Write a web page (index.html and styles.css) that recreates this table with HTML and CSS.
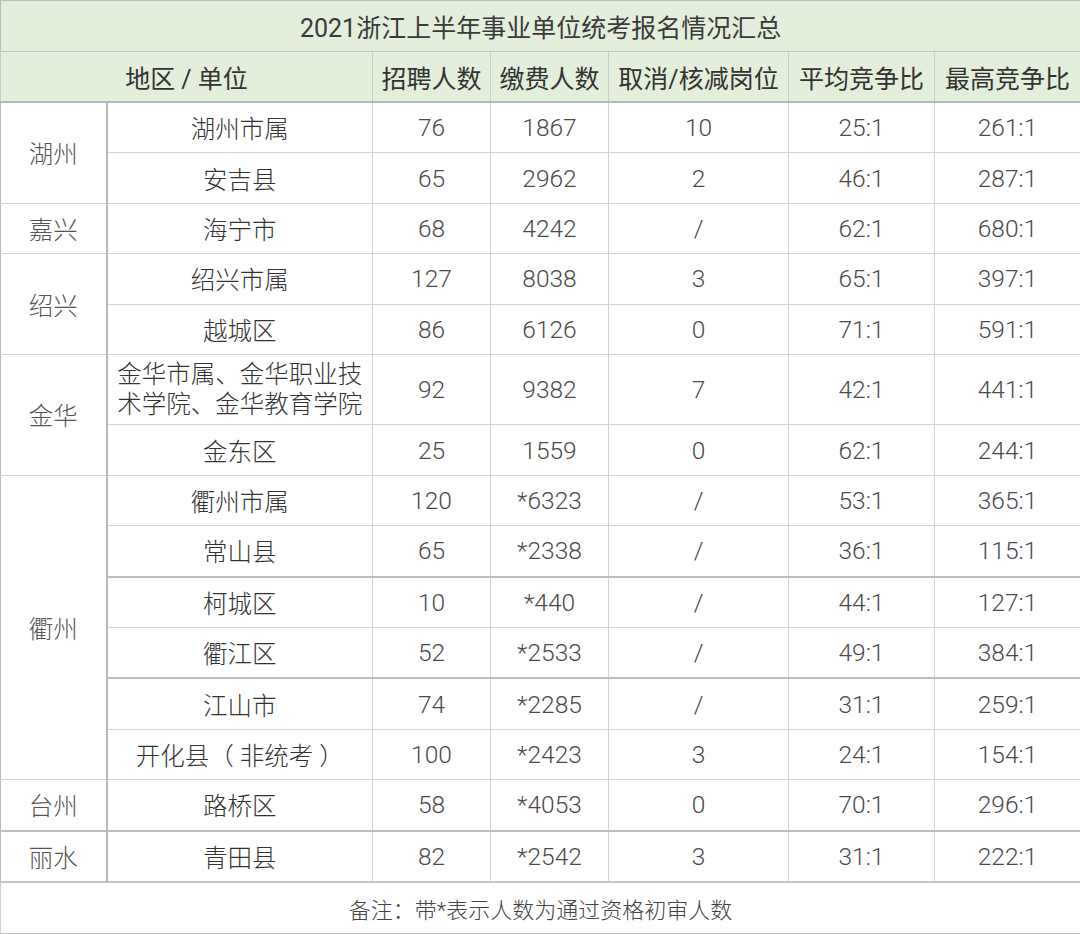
FILE: index.html
```html
<!DOCTYPE html>
<html lang="zh-CN">
<head>
<meta charset="utf-8">
<title>2021浙江上半年事业单位统考报名情况汇总</title>
<link rel="stylesheet" href="styles.css">
</head>
<body>
<table class="sheet">
  <colgroup>
    <col class="c-area"><col class="c-unit"><col class="c-n1"><col class="c-n2"><col class="c-n3"><col class="c-n4"><col class="c-n5">
  </colgroup>
  <thead>
    <tr class="title-row"><th colspan="7">2021浙江上半年事业单位统考报名情况汇总</th></tr>
    <tr class="head-row">
      <th colspan="2">地区 / 单位</th>
      <th>招聘人数</th>
      <th>缴费人数</th>
      <th>取消/核减岗位</th>
      <th>平均竞争比</th>
      <th>最高竞争比</th>
    </tr>
  </thead>
  <tbody>
    <tr><td class="area" rowspan="2">湖州</td><td class="unit">湖州市属</td><td>76</td><td>1867</td><td>10</td><td>25:1</td><td>261:1</td></tr>
    <tr><td class="unit">安吉县</td><td>65</td><td>2962</td><td>2</td><td>46:1</td><td>287:1</td></tr>
    <tr class="grp"><td class="area">嘉兴</td><td class="unit">海宁市</td><td>68</td><td>4242</td><td>/</td><td>62:1</td><td>680:1</td></tr>
    <tr class="grp"><td class="area" rowspan="2">绍兴</td><td class="unit">绍兴市属</td><td>127</td><td>8038</td><td>3</td><td>65:1</td><td>397:1</td></tr>
    <tr><td class="unit">越城区</td><td>86</td><td>6126</td><td>0</td><td>71:1</td><td>591:1</td></tr>
    <tr class="grp tall"><td class="area" rowspan="2">金华</td><td class="unit wrap">金华市属、金华职业技术学院、金华教育学院</td><td>92</td><td>9382</td><td>7</td><td>42:1</td><td>441:1</td></tr>
    <tr><td class="unit">金东区</td><td>25</td><td>1559</td><td>0</td><td>62:1</td><td>244:1</td></tr>
    <tr class="grp"><td class="area" rowspan="6">衢州</td><td class="unit">衢州市属</td><td>120</td><td>*6323</td><td>/</td><td>53:1</td><td>365:1</td></tr>
    <tr><td class="unit">常山县</td><td>65</td><td>*2338</td><td>/</td><td>36:1</td><td>115:1</td></tr>
    <tr class="dark"><td class="unit">柯城区</td><td>10</td><td>*440</td><td>/</td><td>44:1</td><td>127:1</td></tr>
    <tr><td class="unit">衢江区</td><td>52</td><td>*2533</td><td>/</td><td>49:1</td><td>384:1</td></tr>
    <tr class="dark"><td class="unit">江山市</td><td>74</td><td>*2285</td><td>/</td><td>31:1</td><td>259:1</td></tr>
    <tr><td class="unit">开化县（ 非统考 ）</td><td>100</td><td>*2423</td><td>3</td><td>24:1</td><td>154:1</td></tr>
    <tr class="grp"><td class="area">台州</td><td class="unit">路桥区</td><td>58</td><td>*4053</td><td>0</td><td>70:1</td><td>296:1</td></tr>
    <tr class="grp dark"><td class="area">丽水</td><td class="unit">青田县</td><td>82</td><td>*2542</td><td>3</td><td>31:1</td><td>222:1</td></tr>
  </tbody>
  <tfoot>
    <tr class="note-row"><td colspan="7">备注：带*表示人数为通过资格初审人数</td></tr>
  </tfoot>
</table>
</body>
</html>
```

FILE: styles.css
```css
html, body {
  margin: 0;
  padding: 0;
  background: #ffffff;
}

.sheet {
  width: 1080px;
  border-collapse: collapse;
  table-layout: fixed;
  font-family: Roboto, "Noto Sans CJK SC", sans-serif;
  font-weight: 300;
  color: #4a4a4a;
}

.c-area { width: 106px; }
.c-unit { width: 266px; }
.c-n1 { width: 118px; }
.c-n2 { width: 118px; }
.c-n3 { width: 180px; }
.c-n4 { width: 146px; }
.c-n5 { width: 146px; }

.sheet th,
.sheet td {
  border: 1px solid #d2d2d2;
  padding: 0;
  text-align: center;
  vertical-align: middle;
  white-space: nowrap;
}

.title-row th {
  height: 50px;
  background: #e3eedb;
  font-size: 25px;
  font-weight: 400;
  color: #3a3a3a;
  border: 1px solid #bcbcbc;
  border-bottom: 1px solid #c4c4c4;
}

.head-row th {
  height: 49px;
  background: #e3eedb;
  font-size: 25px;
  font-weight: 400;
  color: #333333;
  border-color: #c8cfc4;
  border-bottom: 2px solid #b5b5b5;
}

.sheet tbody td {
  height: 49.4px;
  font-size: 24.5px;
}

.sheet td.area {
  color: #555555;
  border-right: 2px solid #b8b8b8;
  border-left: 1px solid #b8b8b8;
}

.sheet td.unit {
  color: #333333;
}

.sheet td.wrap {
  white-space: normal;
  line-height: 30px;
  padding: 0 8px;
}

.sheet tr.tall td {
  height: 69.5px;
}

.sheet tr.grp td {
  border-top: 1px solid #b8b8b8;
}

.sheet tr.dark td {
  border-top: 2px solid #bdbdbd;
}

.note-row td {
  height: 50px;
  font-size: 22px;
  color: #444444;
  border-top: 2px solid #c4c4c4;
  border-bottom: 1px solid #c4c4c4;
}
```
